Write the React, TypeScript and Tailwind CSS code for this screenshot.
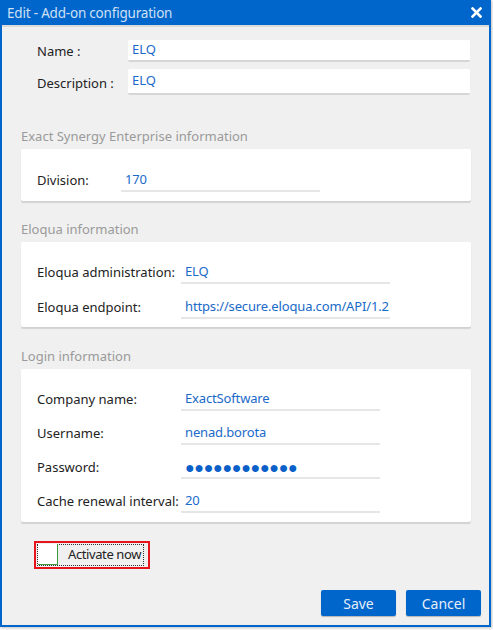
import React from "react";

const font = { fontFamily: '"Noto Sans", "Open Sans", sans-serif' };

function TopField({ label, value, h, lpt }: { label: string; value: string; h: string; lpt: string }) {
  return (
    <div className="flex items-center pl-[16px]">
      <div className={`w-[91px] text-[13px] text-[#222] ${lpt}`}>{label}</div>
      <div className={`w-[342px] ${h} bg-white rounded-[2px] border-b-2 border-[#d6d6d6] flex items-center pl-[4px] text-[13px] text-[#1a6ac8]`}>
        {value}
      </div>
    </div>
  );
}

function Row({ label, value, labelW, inputW, dots }: { label: string; value: string; labelW: string; inputW: string; dots?: boolean }) {
  return (
    <div className="flex items-end pl-[16px]">
      <div className={`${labelW} text-[13px] text-[#222] h-[22px] flex items-center`}>{label}</div>
      <div className={`${inputW} h-[22px] border-b-2 border-[#e6e6e6] flex items-center pl-[4px] text-[13px] tracking-[-0.15px] text-[#1a6ac8] whitespace-nowrap`}>
        {dots ? <span className="text-[16px] tracking-[-0.3px] text-[#0a5fc8] leading-none">●●●●●●●●●●●●</span> : value}
      </div>
    </div>
  );
}

function Card({ children, pt, pb, gap }: { children: React.ReactNode; pt: string; pb: string; gap: string }) {
  return (
    <div className={`bg-white rounded-[2px] shadow-[0_2px_1px_rgba(0,0,0,0.12)] flex flex-col ${pt} ${pb} ${gap}`}>
      {children}
    </div>
  );
}

function Header({ text, mt }: { text: string; mt: string }) {
  return <div className={`${mt} h-[18px] leading-[18px] text-[13px] text-[#9a9a9a] mb-[4px]`}>{text}</div>;
}

export default function App() {
  return (
    <div className="w-[493px] h-[630px] bg-[#f7f7f7] relative overflow-hidden" style={font}>
      <div className="w-[491px] h-[627px] bg-[#f0f0f0] border-l-2 border-r-2 border-b-2 border-[#0066cc] flex flex-col shadow-[1px_1px_2px_rgba(0,0,0,0.2)]">
        <div className="h-[25px] bg-[#0066cc] flex items-center justify-between pl-[5px] pr-[7px]">
          <span className="text-[13.5px] tracking-[-0.2px] text-[#cfe0f4] pt-[1px]">Edit - Add-on configuration</span>
          <svg width="11" height="11" viewBox="0 0 11 11">
            <path d="M1.5 1.5 L9.5 9.5 M9.5 1.5 L1.5 9.5" stroke="#ffffff" strokeWidth="2.6" strokeLinecap="square" />
          </svg>
        </div>
        <div className="h-[2px] bg-[#dadada]" />
        <div className="flex flex-col pl-[19px] pr-[18px]">
          <div className="mt-[13px] flex flex-col gap-[7px]">
            <TopField label="Name :" value="ELQ" h="h-[22px]" lpt="pt-[1px]" />
            <TopField label="Description :" value="ELQ" h="h-[26px]" lpt="pt-[4px]" />
          </div>

          <Header text="Exact Synergy Enterprise information" mt="mt-[32px]" />
          <Card pt="pt-[21px]" pb="pb-[9px]" gap="gap-0">
            <Row label="Division:" value="170" labelW="w-[84px]" inputW="w-[199px]" />
          </Card>

          <Header text="Eloqua information" mt="mt-[19px]" />
          <Card pt="pt-[20px]" pb="pb-[8px]" gap="gap-[13px]">
            <Row label="Eloqua administration:" value="ELQ" labelW="w-[144px]" inputW="w-[209px]" />
            <Row label="Eloqua endpoint:" value="https://secure.eloqua.com/API/1.2" labelW="w-[144px]" inputW="w-[209px]" />
          </Card>

          <Header text="Login information" mt="mt-[20px]" />
          <Card pt="pt-[20px]" pb="pb-[9px]" gap="gap-[12px]">
            <Row label="Company name:" value="ExactSoftware" labelW="w-[144px]" inputW="w-[199px]" />
            <Row label="Username:" value="nenad.borota" labelW="w-[144px]" inputW="w-[199px]" />
            <Row label="Password:" value="" labelW="w-[144px]" inputW="w-[199px]" dots />
            <Row label="Cache renewal interval:" value="20" labelW="w-[144px]" inputW="w-[199px]" />
          </Card>

          <div className="mt-[19px] ml-[13px] w-[116px] h-[28px] border-2 border-[#e8141c] flex items-center pl-[1px]">
            <div className="h-[22px] w-[107px] border border-dotted border-[#333] flex items-center">
              <div className="w-[20px] h-[21px] bg-white border-r border-b border-[#3c9a3c] -mt-[1px] shrink-0" />
              <span className="ml-[10px] text-[13px] tracking-[-0.4px] text-[#222] whitespace-nowrap">Activate now</span>
            </div>
          </div>

          <div className="mt-[21px] flex justify-end gap-[10px] -mr-[10px]">
            <button className="w-[75px] h-[26px] bg-[#0066cc] rounded-[2px] text-[14px] text-[#e6eefa] shadow-[0_1px_1px_rgba(0,0,0,0.25)]">Save</button>
            <button className="w-[75px] h-[26px] bg-[#0066cc] rounded-[2px] text-[14px] text-[#e6eefa] shadow-[0_1px_1px_rgba(0,0,0,0.25)]">Cancel</button>
          </div>
        </div>
      </div>
    </div>
  );
}
